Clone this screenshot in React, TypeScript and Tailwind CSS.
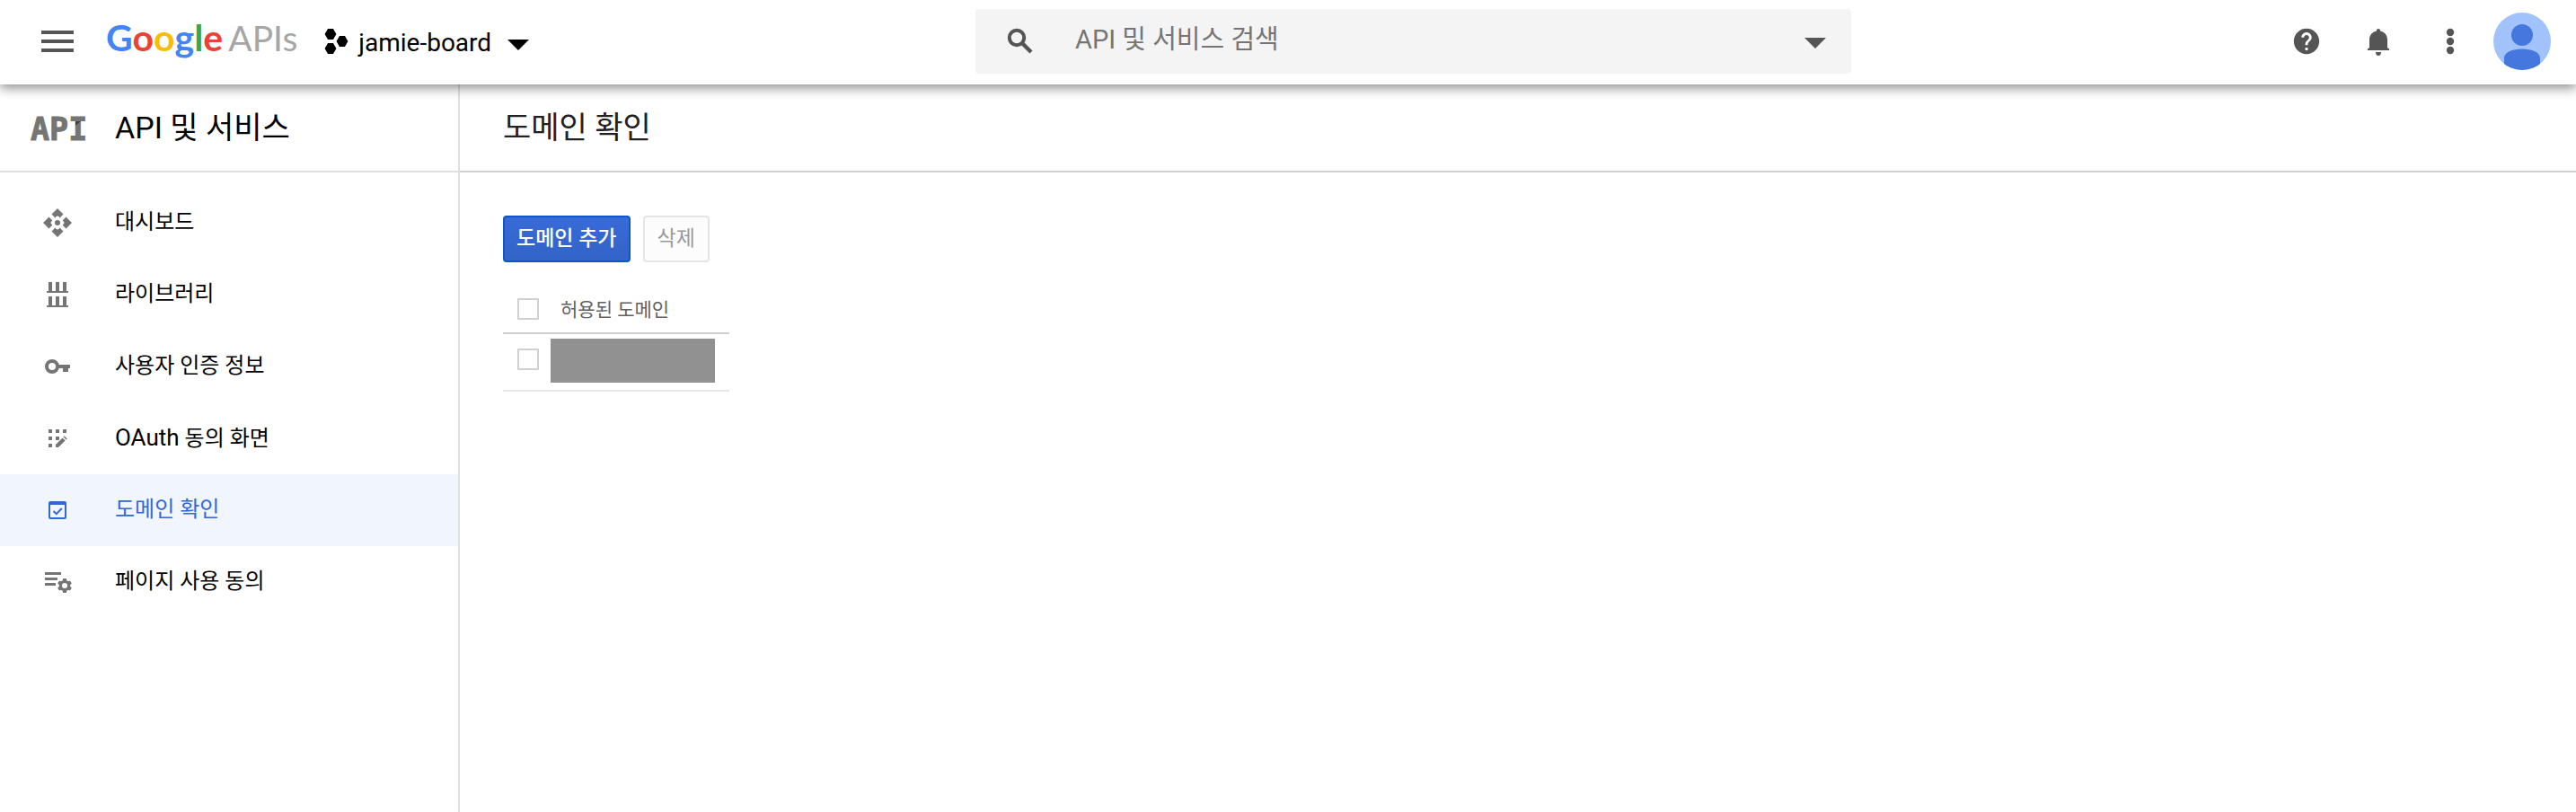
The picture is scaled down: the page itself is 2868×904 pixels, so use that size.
import React, { useState } from 'react';

interface NavItem {
  id: string;
  label: React.ReactNode;
  icon: React.ReactNode;
}

const ApiLogo = () => (
  <svg viewBox="0 0 68 48" className="w-[68px] h-12 overflow-visible" aria-hidden="true">
    <text
      x="2"
      y="38"
      fill="#757575"
      stroke="#757575"
      strokeWidth="1"
      className="font-['DejaVu_Sans_Mono',monospace] text-[35px] font-bold"
    >
      API
    </text>
    <path d="M52 17h6l-6 5z" fill="#424242" />
  </svg>
);

const DashboardIcon = () => (
  <svg viewBox="0 0 36 36" className="w-9 h-9" fill="currentColor" aria-hidden="true">
    {[0, 90, 180, 270].map((angle) => (
      <path
        key={angle}
        d="M18 2L24.5 8.5L20.6 12.4L19.6 11.2Q18 9.6 16.4 11.2L15.4 12.4L11.5 8.5Z"
        transform={`rotate(${angle} 18 18)`}
      />
    ))}
    <circle cx="18" cy="18" r="3" />
  </svg>
);

const LibraryIcon = () => (
  <svg viewBox="0 0 36 36" className="w-9 h-9" fill="currentColor" aria-hidden="true">
    <path d="M8 4h4v10h4V4h4v10h4V4h4v10h2v2H6v-2h2zM8 20h4v10h4V20h4v10h4V20h4v10h2v2H6v-2h2z" />
  </svg>
);

const KeyIcon = () => (
  <svg viewBox="0 0 36 36" className="w-9 h-9" fill="currentColor" aria-hidden="true">
    <circle cx="12" cy="18" r="6" fill="none" stroke="currentColor" strokeWidth="4" />
    <path d="M19 16h13v4h-2v4h-6v-4h-5z" />
  </svg>
);

const ConsentIcon = () => (
  <svg viewBox="0 0 36 36" className="w-9 h-9" fill="currentColor" aria-hidden="true">
    <path d="M8 8h4v4H8zM16 8h4v4h-4zM24 8h4v4h-4zM8 16h4v4H8zM16 16h4v4h-4zM8 24h4v4H8z" />
    <path d="M16 28v-3l7.6-7.6 3 3L19 28zM24.6 16.6l1.2-1.2 3 3-1.2 1.2z" />
  </svg>
);

const DomainIcon = () => (
  <svg viewBox="0 0 36 36" className="w-9 h-9" fill="currentColor" aria-hidden="true">
    <path
      fillRule="evenodd"
      d="M10 8h16a2 2 0 0 1 2 2v16a2 2 0 0 1-2 2H10a2 2 0 0 1-2-2V10a2 2 0 0 1 2-2zM10 12v14h16V12z"
    />
    <path d="M13.5 19l3.3 3.2 6-6.2" fill="none" stroke="currentColor" strokeWidth="2" />
  </svg>
);

const AgreementIcon = () => (
  <svg viewBox="0 0 36 36" className="w-9 h-9" fill="currentColor" aria-hidden="true">
    <path d="M4 7h18v3H4zM4 13h14v3H4zM4 19h12v3H4z" />
    <circle cx="26" cy="22" r="4.6" fill="none" stroke="currentColor" strokeWidth="3.2" />
    {[0, 60, 120, 180, 240, 300].map((angle) => (
      <path key={angle} d="M24.2 14h3.6l.6 3h-4.8z" transform={`rotate(${angle} 26 22)`} />
    ))}
  </svg>
);

const CaretIcon = () => (
  <svg viewBox="0 0 24 12" className="w-6 h-3" fill="currentColor" aria-hidden="true">
    <path d="M0 0h24L12 12z" />
  </svg>
);

const navItems: NavItem[] = [
  { id: 'dashboard', label: '대시보드', icon: <DashboardIcon /> },
  { id: 'library', label: '라이브러리', icon: <LibraryIcon /> },
  { id: 'credentials', label: '사용자 인증 정보', icon: <KeyIcon /> },
  { id: 'consent', label: <><span className="text-[26px]">OAuth</span> 동의 화면</>, icon: <ConsentIcon /> },
  { id: 'domain', label: '도메인 확인', icon: <DomainIcon /> },
  { id: 'agreement', label: '페이지 사용 동의', icon: <AgreementIcon /> },
];

const Header: React.FC = () => {
  const [query, setQuery] = useState('');

  return (
    <header className="relative z-10 flex items-center justify-between h-[94px] pb-0.5 bg-white text-[#555] shadow-[0_4px_12px_rgba(0,0,0,0.45)]">
      <div className="flex items-center pl-10 pr-[30px]">
        <button type="button" aria-label="메뉴">
          <svg viewBox="0 0 24 24" className="w-12 h-12" fill="currentColor" aria-hidden="true">
            <path d="M3 18h18v-2H3v2zm0-5h18v-2H3v2zm0-7v2h18V6H3z" />
          </svg>
        </button>
        <a href="#" className="flex items-baseline ml-[30px] pb-2 font-['Lato',sans-serif] leading-[48px]">
          <span className="text-[41px] font-bold">
            <span className="text-[#4285f4]">G</span>
            <span className="text-[#ea4335]">o</span>
            <span className="text-[#fbbc05]">o</span>
            <span className="text-[#4285f4]">g</span>
            <span className="text-[#34a853]">l</span>
            <span className="text-[#ea4335]">e</span>
          </span>
          <span className="ml-1.5 text-[39px] text-[#a6a6a6]">APIs</span>
        </a>
        <button type="button" className="flex items-center ml-[30px] pt-1 text-[28px] text-black">
          <svg viewBox="0 0 28 32" className="w-7 h-8" fill="currentColor" aria-hidden="true">
            <path d="M4 0h6l3.4 6L10 12H4L.6 6zM17 8h6l3.4 6-3.4 6h-6l-3.4-6zM4 16h6l3.4 6L10 28H4L.6 22z" />
          </svg>
          <span className="ml-2.5 mr-[18px]">jamie-board</span>
          <span className="pt-1"><CaretIcon /></span>
        </button>
      </div>

      <div className="flex items-center w-[34%] h-[72px] pl-8 pr-7 bg-[#f4f4f4] rounded">
        <svg viewBox="0 0 36 36" className="w-9 h-9 shrink-0" fill="none" stroke="currentColor" strokeWidth="4" aria-hidden="true">
          <circle cx="14" cy="14" r="8.2" />
          <path d="M19.5 19.5L30 30" strokeWidth="4.4" />
        </svg>
        <input
          type="text"
          value={query}
          onChange={(e) => setQuery(e.target.value)}
          aria-label="검색"
          placeholder="API 및 서비스 검색"
          className="flex-1 min-w-0 ml-[43px] pb-0.5 text-[29px] placeholder:text-[#757575] focus:outline-none"
        />
        <button type="button" aria-label="검색 옵션" className="pt-1">
          <CaretIcon />
        </button>
      </div>

      <div className="flex items-center pr-5">
        <button type="button" aria-label="도움말" className="flex justify-center w-20">
          <svg viewBox="0 0 24 24" className="w-[34px] h-[34px]" fill="currentColor" aria-hidden="true">
            <path d="M12 2C6.48 2 2 6.48 2 12s4.480 10 10 10 10-4.480 10-10S17.520 2 12 2zm1 17h-2v-2h2v2zm2.070-7.750l-.9.92C13.450 12.900 13 13.500 13 15h-2v-.5c0-1.100.45-2.100 1.170-2.830l1.240-1.260c.37-.36.59-.86.59-1.410 0-1.100-.9-2-2-2s-2 .9-2 2H8c0-2.210 1.790-4 4-4s4 1.790 4 4c0 .88-.36 1.680-.93 2.250z" />
          </svg>
        </button>
        <button type="button" aria-label="알림" className="flex justify-center w-20">
          <svg viewBox="0 0 36 36" className="w-9 h-9" fill="currentColor" aria-hidden="true">
            <path d="M18 4c-1.300 0-2 .8-2 2v.6C11.200 7.600 8 11.400 8 16v9l-2 1.500V28h24v-1.500L28 25v-9c0-4.600-3.200-8.400-8-9.400V6c0-1.200-.7-2-2-2zM15 30a3 4 0 0 0 6 0z" />
          </svg>
        </button>
        <button type="button" aria-label="더보기" className="flex justify-center w-20">
          <svg viewBox="0 0 36 36" className="w-9 h-9" fill="currentColor" aria-hidden="true">
            <circle cx="18" cy="8" r="4.200" />
            <circle cx="18" cy="18" r="4.200" />
            <circle cx="18" cy="28" r="4.200" />
          </svg>
        </button>
        <button type="button" aria-label="계정" className="flex justify-center w-20">
          <svg viewBox="0 0 64 64" className="w-16 h-16 rounded-full bg-[#a1c2fa]" fill="#4577de" aria-hidden="true">
            <circle cx="32" cy="25" r="12" />
            <path d="M12 64V51C12 44 21 40.500 32 40.500S52 44 52 51v13z" />
          </svg>
        </button>
      </div>
    </header>
  );
};

const Sidebar: React.FC = () => {
  const [active, setActive] = useState('domain');

  return (
    <aside className="w-[512px] shrink-0 border-r-2 border-[#e0e0e0]">
      <div className="flex items-center h-[98px] gap-7 pl-8 border-b-2 border-[#e0e0e0]">
        <ApiLogo />
        <h2 className="text-[34px] text-black">API 및 서비스</h2>
      </div>
      <nav className="pt-4">
        {navItems.map((item) => (
          <a
            key={item.id}
            href={`#${item.id}`}
            onClick={() => setActive(item.id)}
            className={`flex items-center h-20 pl-[46px] text-[24px] ${
              active === item.id ? 'bg-[#f0f5fe] text-[#3367d6]' : 'text-black'
            }`}
          >
            <span className={`mr-[46px] ${active === item.id ? 'text-[#3367d6]' : 'text-[#757575]'}`}>
              {item.icon}
            </span>
            <span className="pb-0.5">{item.label}</span>
          </a>
        ))}
      </nav>
    </aside>
  );
};

const App: React.FC = () => {
  const [checked, setChecked] = useState(false);
  const checkboxClass =
    'block w-6 h-6 appearance-none border-2 border-[#d0d0d0] bg-white checked:bg-[#3367d6]';

  return (
    <div className="flex flex-col min-h-screen bg-white font-['Roboto','Noto_Sans_CJK_KR',sans-serif]">
      <Header />
      <div className="flex flex-1">
        <Sidebar />
        <main className="flex-1 min-w-0">
          <div className="flex items-center h-[98px] pl-12 border-b-2 border-[#d0d0d0]">
            <h1 className="text-[34px] text-[#212121]">도메인 확인</h1>
          </div>
          <div className="px-12 pt-12">
            <div className="flex gap-3.5">
              <button
                type="button"
                className="h-[52px] px-[13px] border-2 border-[#1155cc] rounded bg-linear-to-b from-[#376bd8] to-[#3363c7] text-[23px] font-medium leading-7 text-white"
              >
                도메인 추가
              </button>
              <button
                type="button"
                disabled={!checked}
                className="h-[52px] px-3.5 border-2 border-[#e4e4e4] rounded bg-[#fcfcfc] text-[23px] leading-7 text-[#999]"
              >
                삭제
              </button>
            </div>
            <table className="mt-[23px] text-left">
              <thead>
                <tr className="h-14 border-b-2 border-[#d0d0d0]">
                  <th className="pl-4 pr-[13px] pt-0.5">
                    <input
                      type="checkbox"
                      aria-label="모두 선택"
                      checked={checked}
                      onChange={(e) => setChecked(e.target.checked)}
                      className={checkboxClass}
                    />
                  </th>
                  <th className="pl-[11px] pt-1.5 text-[21px] font-normal text-[#616161]">허용된 도메인</th>
                </tr>
              </thead>
              <tbody>
                <tr className="h-16 border-b-2 border-[#e8e8e8] align-top">
                  <td className="pl-4 pt-4">
                    <input
                      type="checkbox"
                      aria-label="도메인 선택"
                      checked={checked}
                      onChange={(e) => setChecked(e.target.checked)}
                      className={checkboxClass}
                    />
                  </td>
                  <td className="pt-[5px] pr-4">
                    <div className="w-[183px] h-[49px] bg-[#919191]" />
                  </td>
                </tr>
              </tbody>
            </table>
          </div>
        </main>
      </div>
    </div>
  );
};

export default App;
